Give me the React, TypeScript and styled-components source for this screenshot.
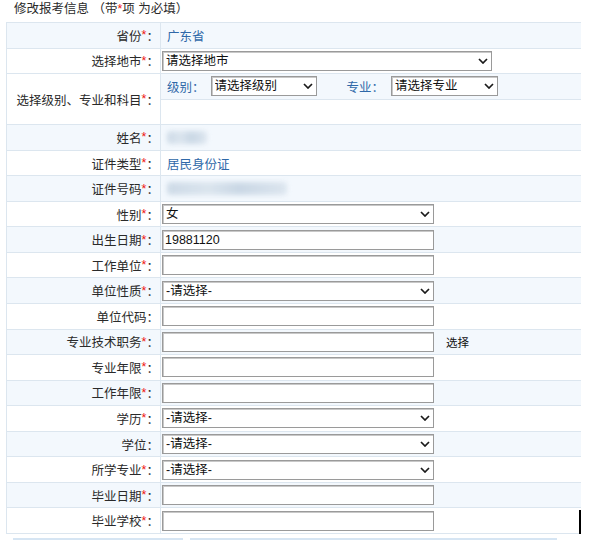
import React from "react";
import styled, { createGlobalStyle } from "styled-components";

const GlobalStyle = createGlobalStyle`
  html, body {
    margin: 0;
    padding: 0;
    background: #ffffff;
  }
  body {
    font-family: "Liberation Sans", "Noto Sans CJK SC", sans-serif;
    font-size: 12.5px;
    color: #2a2a2a;
  }
`;

const Page = styled.div`
  position: relative;
  width: 595px;
  height: 541px;
  overflow: hidden;
`;

const Title = styled.div`
  height: 22px;
  line-height: 18px;
  padding-left: 14px;
  font-size: 12.5px;
  color: #2a2a2a;
  white-space: pre;
`;

const Star = styled.span`
  color: #ee1111;
`;

const FormGrid = styled.div`
  display: grid;
  grid-template-columns: 154px 1fr;
  grid-auto-rows: 25.55px;
  width: 574px;
  margin-left: 6px;
  border-top: 1px solid #dce6ef;
  border-left: 1px solid #dce6ef;
`;

const Label = styled.div<{ $alt: boolean; $span?: number }>`
  box-sizing: border-box;
  display: flex;
  align-items: center;
  justify-content: flex-end;
  padding-right: 1px;
  white-space: nowrap;
  color: #2a2a2a;
  background: ${(p) => (p.$alt ? "#f3f8fd" : "#ffffff")};
  border-right: 1px solid #dce6ef;
  border-bottom: 1px solid #dce6ef;
  grid-row: ${(p) => (p.$span ? `span ${p.$span}` : "auto")};
`;

const Value = styled.div<{ $alt: boolean }>`
  box-sizing: border-box;
  display: flex;
  align-items: center;
  padding-left: 1px;
  background: ${(p) => (p.$alt ? "#f3f8fd" : "#ffffff")};
  border-bottom: 1px solid #dce6ef;
`;

const BlueText = styled.span<{ $ml?: number }>`
  color: #2f68a8;
  margin-left: ${(p) => p.$ml ?? 5}px;
  white-space: nowrap;
`;

const Blur = styled.span<{ $w: number }>`
  display: inline-block;
  width: ${(p) => p.$w}px;
  height: 13px;
  margin-left: 5px;
  border-radius: 4px;
  background: linear-gradient(90deg, #c7d5e3 0%, #d7e2ec 35%, #c3d2e1 60%, #d9e3ed 100%);
  filter: blur(2.5px);
  opacity: 0.85;
`;

const TextInput = styled.input<{ $w?: number }>`
  box-sizing: border-box;
  width: ${(p) => p.$w ?? 272}px;
  height: 20px;
  margin: 0;
  padding: 0 2px;
  border: 1px solid #9a9a9a;
  box-shadow: inset 1px 1px 0 #c8c8c8;
  background: #fff;
  font-family: "Liberation Sans", "Noto Sans CJK SC", sans-serif;
  font-size: 12.5px;
  color: #111;
  outline: none;
`;

const SelectWrap = styled.span<{ $w: number; $ml?: number }>`
  position: relative;
  display: inline-block;
  width: ${(p) => p.$w}px;
  height: 20px;
  margin-left: ${(p) => p.$ml ?? 0}px;
  flex: none;
`;

const NativeSelect = styled.select`
  box-sizing: border-box;
  width: 100%;
  height: 20px;
  margin: 0;
  padding: 0 16px 0 3px;
  border: 1px solid #9a9a9a;
  box-shadow: inset 1px 1px 0 #c8c8c8;
  border-radius: 0;
  background: #fff;
  appearance: none;
  -webkit-appearance: none;
  font-family: "Liberation Sans", "Noto Sans CJK SC", sans-serif;
  font-size: 12.5px;
  color: #111;
  outline: none;
`;

const Chevron = styled.svg`
  position: absolute;
  right: 4px;
  top: 7px;
  width: 10px;
  height: 6px;
  pointer-events: none;
`;

const SideText = styled.span`
  margin-left: 12px;
  color: #111;
  font-size: 11.5px;
`;

const BottomRule = styled.div`
  display: flex;
  gap: 7px;
  margin: 4px 0 0 13px;
`;

const RuleSeg = styled.div<{ $w: number }>`
  width: ${(p) => p.$w}px;
  height: 2px;
  background: #d6e5f3;
`;

const Caret = styled.div`
  position: absolute;
  left: 579px;
  top: 510px;
  width: 2px;
  height: 24px;
  background: #000;
`;

function Select({ w, text, ml }: { w: number; text: string; ml?: number }) {
  return (
    <SelectWrap $w={w} $ml={ml}>
      <NativeSelect defaultValue={text}>
        <option value={text}>{text}</option>
      </NativeSelect>
      <Chevron viewBox="0 0 10 6">
        <path d="M1 1 L5 5 L9 1" fill="none" stroke="#1a1a1a" strokeWidth="1.7" />
      </Chevron>
    </SelectWrap>
  );
}

type Row = {
  label: string;
  req: boolean;
  content: React.ReactNode;
};

const rowsAfter: Row[] = [
  { label: "姓名", req: true, content: <Blur $w={40} /> },
  { label: "证件类型", req: true, content: <BlueText>居民身份证</BlueText> },
  { label: "证件号码", req: true, content: <Blur $w={120} /> },
  { label: "性别", req: true, content: <Select w={272} text="女" /> },
  { label: "出生日期", req: true, content: <TextInput defaultValue="19881120" /> },
  { label: "工作单位", req: true, content: <TextInput /> },
  { label: "单位性质", req: true, content: <Select w={272} text="-请选择-" /> },
  { label: "单位代码", req: false, content: <TextInput /> },
  {
    label: "专业技术职务",
    req: true,
    content: (
      <>
        <TextInput />
        <SideText>选择</SideText>
      </>
    ),
  },
  { label: "专业年限", req: true, content: <TextInput /> },
  { label: "工作年限", req: true, content: <TextInput /> },
  { label: "学历", req: true, content: <Select w={272} text="-请选择-" /> },
  { label: "学位", req: false, content: <Select w={272} text="-请选择-" /> },
  { label: "所学专业", req: true, content: <Select w={272} text="-请选择-" /> },
  { label: "毕业日期", req: true, content: <TextInput /> },
  { label: "毕业学校", req: true, content: <TextInput /> },
];

function LabelText({ text, req }: { text: string; req: boolean }) {
  return (
    <>
      {text}
      {req && <Star>*</Star>}：
    </>
  );
}

export default function App() {
  return (
    <Page>
      <GlobalStyle />
      <Title>
        修改报考信息 （带<Star>*</Star>项 为必填）
      </Title>
      <FormGrid>
        <Label $alt>
          <LabelText text="省份" req />
        </Label>
        <Value $alt>
          <BlueText>广东省</BlueText>
        </Value>

        <Label $alt={false}>
          <LabelText text="选择地市" req />
        </Label>
        <Value $alt={false}>
          <Select w={330} text="请选择地市" />
        </Value>

        <Label $alt={false} $span={2}>
          <LabelText text="选择级别、专业和科目" req />
        </Label>
        <Value $alt>
          <BlueText>级别：</BlueText>
          <Select w={106} text="请选择级别" ml={6} />
          <BlueText $ml={30}>专业：</BlueText>
          <Select w={107} text="请选择专业" ml={7} />
        </Value>
        <Value $alt={false} />

        {rowsAfter.map((r, i) => {
          const alt = i % 2 === 0;
          return (
            <React.Fragment key={r.label}>
              <Label $alt={alt}>
                <LabelText text={r.label} req={r.req} />
              </Label>
              <Value $alt={alt}>{r.content}</Value>
            </React.Fragment>
          );
        })}
      </FormGrid>
      <BottomRule>
        <RuleSeg $w={170} />
        <RuleSeg $w={367} />
      </BottomRule>
      <Caret />
    </Page>
  );
}
